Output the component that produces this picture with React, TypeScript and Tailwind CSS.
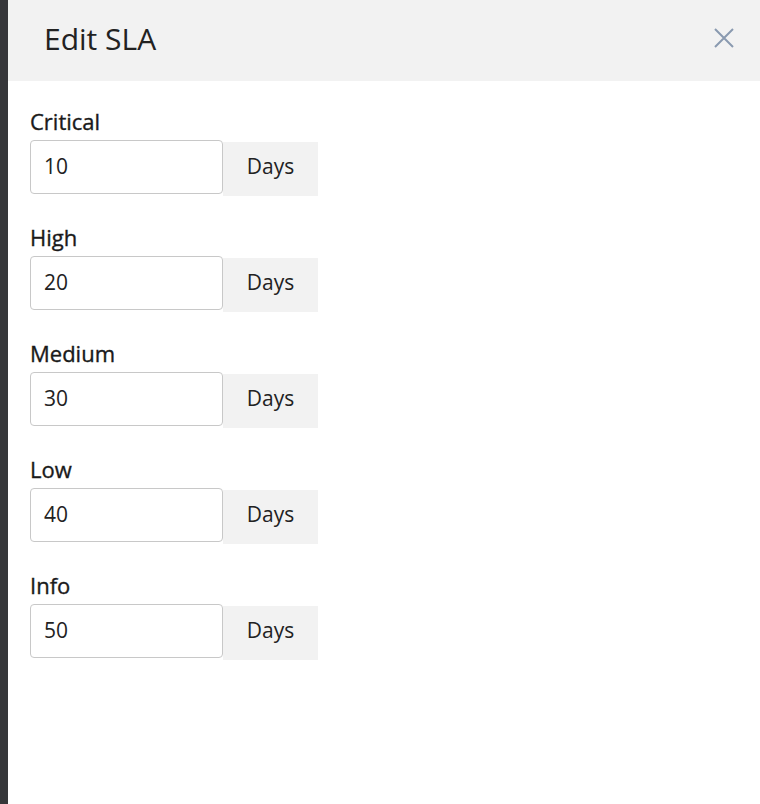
import React from "react";

const rows = [
  { label: "Critical", value: "10" },
  { label: "High", value: "20" },
  { label: "Medium", value: "30" },
  { label: "Low", value: "40" },
  { label: "Info", value: "50" },
];

export default function App() {
  return (
    <div
      className="flex h-[804px] w-[760px] overflow-hidden bg-white"
      style={{ fontFamily: '"Open Sans", "Noto Sans", sans-serif' }}
    >
      <div className="h-full w-[8px] shrink-0 bg-[#36373a]" />
      <div className="flex min-w-0 flex-1 flex-col bg-white">
        <div className="flex h-[81px] shrink-0 items-center justify-between bg-[#f2f2f2] pl-[36px] pr-[24px]">
          <h1 className="text-[30px] leading-[36px] text-[#222] mt-[-4px]">Edit SLA</h1>
          <button className="mt-[-6px] flex h-[24px] w-[24px] items-center justify-center text-[#8a9ab0]">
            <svg width="20" height="20" viewBox="0 0 20 20" fill="none" stroke="currentColor" strokeWidth="2" strokeLinecap="butt">
              <path d="M1 1 L19 19 M19 1 L1 19" />
            </svg>
          </button>
        </div>
        <div className="flex flex-col pl-[22px] pt-[26px]">
          {rows.map((r) => (
            <div key={r.label} className="mb-[27px] flex flex-col">
              <label className="mb-[5px] text-[22px] leading-[28px] text-[#1a1a1a] [-webkit-text-stroke:0.35px]">
                {r.label}
              </label>
              <div className="flex items-start">
                <div className="flex h-[54px] w-[193px] items-center rounded-[4px] border border-[#c8c8c8] bg-white pl-[13px] text-[21px] text-[#222]">
                  {r.value}
                </div>
                <div className="mt-[2px] flex h-[54px] w-[95px] items-center justify-center bg-[#f2f2f2] pb-[4px] text-[21px] text-[#222]">
                  Days
                </div>
              </div>
            </div>
          ))}
        </div>
      </div>
    </div>
  );
}
